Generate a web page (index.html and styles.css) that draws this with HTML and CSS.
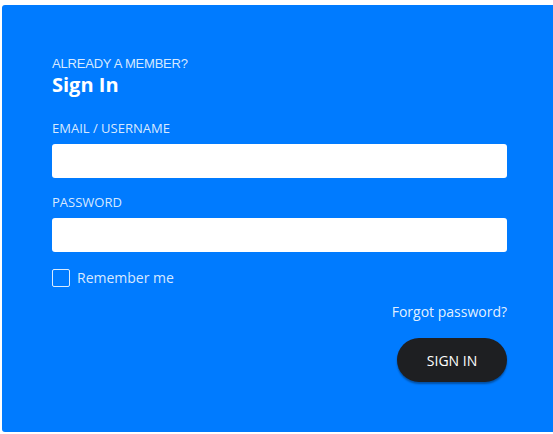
FILE: index.html
```html
<!DOCTYPE html>
<html lang="en">
<head>
    <meta charset="UTF-8">
    <meta name="viewport" content="width=device-width, initial-scale=1.0">
    <title>Sign In</title>
    <link rel="stylesheet" href="styles.css">
</head>
<body>
    <div class="panel">
        <form action="" method="post" class="login">
            <p class="kicker">ALREADY A MEMBER?</p>
            <h2 class="title">Sign In</h2>

            <div class="form-group">
                <label for="email">EMAIL / USERNAME</label>
                <input type="text" id="email">
            </div>
            <div class="form-group">
                <label for="password">PASSWORD</label>
                <input type="password" id="password">
            </div>

            <label class="remember">
                <span class="box"></span>
                Remember me
            </label>

            <div class="actions">
                <a href="#" class="forgot">Forgot password?</a>
                <button type="button">SIGN IN</button>
            </div>
        </form>
    </div>
</body>
</html>
```

FILE: styles.css
```css
*{
    margin: 0;
    padding: 0;
    box-sizing: border-box;
}
body{
    background-color: #fff;
    font-family: "Open Sans", "Liberation Sans", sans-serif;
    overflow: hidden;
}
.panel{
    margin: 5px 0 0 2px;
    width: 551px;
    background-color: #007bff;
    border-radius: 3px 0 0 3px;
    padding: 50px 46px 50px 50px;
}
.login{
    width: 455px;
}
.kicker{
    font-family: "Liberation Sans", Arial, sans-serif;
    font-size: 13px;
    line-height: 18px;
    letter-spacing: -0.2px;
    color: rgba(255, 255, 255, 0.85);
}
.title{
    font-size: 20px;
    line-height: 24px;
    font-weight: 700;
    color: #fff;
    margin-bottom: 22px;
}
.form-group{
    margin-bottom: 15px;
}
.form-group label{
    display: block;
    font-size: 13px;
    line-height: 18px;
    color: rgba(255, 255, 255, 0.85);
    margin-bottom: 7px;
}
.form-group input{
    display: block;
    width: 100%;
    height: 34px;
    border: none;
    border-radius: 3px;
    background-color: #fff;
    padding: 0 10px;
}
.remember{
    display: flex;
    align-items: center;
    gap: 7px;
    margin-top: 17px;
    font-size: 14px;
    line-height: 18px;
    color: rgba(255, 255, 255, 0.85);
}
.box{
    width: 18px;
    height: 18px;
    border: 1px solid rgba(255, 255, 255, 0.85);
    border-radius: 2px;
}
.actions{
    display: flex;
    flex-direction: column;
    align-items: flex-end;
    gap: 16px;
    margin-top: 15px;
}
.forgot{
    font-size: 14px;
    line-height: 20px;
    color: rgba(255, 255, 255, 0.9);
    text-decoration: none;
}
button{
    width: 110px;
    height: 44px;
    border: none;
    border-radius: 22px;
    background-color: #1e1f22;
    color: #fff;
    font-family: "Open Sans", "Liberation Sans", sans-serif;
    font-size: 14px;
    box-shadow: 0 2px 2px rgba(0, 0, 0, 0.35);
}
```
